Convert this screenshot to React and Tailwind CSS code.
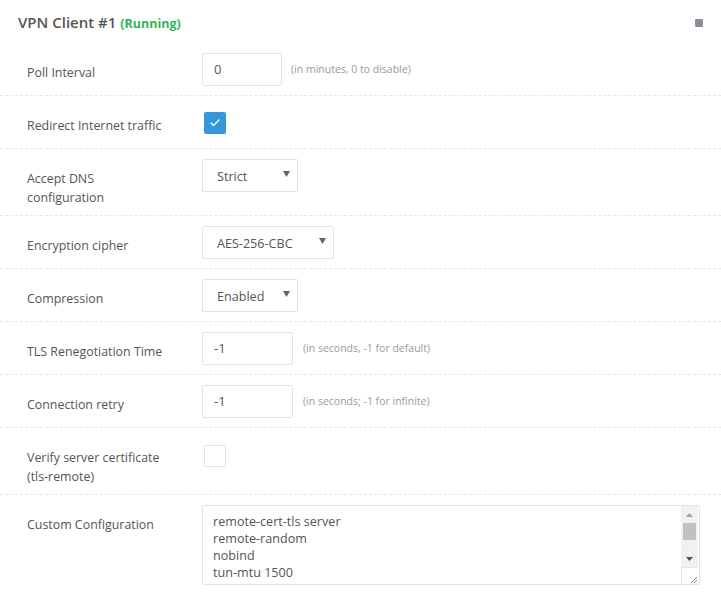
import { Check } from "lucide-react"

const font = { fontFamily: '"Open Sans", "Noto Sans", sans-serif' }

function Row({ label, children, last }) {
  return (
    <div className={`flex pl-[27px] pt-[10px] pb-[9px] ${last ? "" : "border-b border-dashed border-[#e6e6e6]"}`}>
      <div className="w-[175px] shrink-0 pt-[10px] -mb-[1px] pr-[32px] text-[12.4px] leading-[19px] text-[#555]">
        {label}
      </div>
      <div className="flex items-center min-h-[33px] self-start">{children}</div>
    </div>
  )
}

function TextInput({ value, width }) {
  return (
    <div className={`h-[33px] ${width} border border-[#dfe3e6] rounded-[2px] flex items-center pl-[11px] text-[13px] text-[#555]`}>
      {value}
    </div>
  )
}

function Help({ children, gap }) {
  return <span className={`${gap} text-[10.5px] text-[#9a9a9a]`}>{children}</span>
}

function Select({ value, width }) {
  return (
    <div className={`h-[33px] ${width} border border-[#dfe3e6] rounded-[2px] flex items-center justify-between pl-[14px] pr-[7px] text-[12.6px] text-[#555]`}>
      <span className="pt-[3px]">{value}</span>
      <svg width="7" height="6" viewBox="0 0 7 6" className="-mt-[3px]">
        <path d="M0 0H7L3.5 6Z" fill="#666" />
      </svg>
    </div>
  )
}

function Checkbox({ checked }) {
  return checked ? (
    <div className="w-[22px] h-[22px] rounded-[2px] bg-[#3498db] flex items-center justify-center">
      <Check size={12} strokeWidth={2.5} color="#fff" />
    </div>
  ) : (
    <div className="w-[22px] h-[22px] rounded-[2px] border border-[#dfe3e6] bg-white" />
  )
}

function ConfigBox({ lines }) {
  return (
    <div className="w-[498px] h-[80px] border border-[#dfe3e6] rounded-[2px] flex overflow-hidden">
      <div className="flex-1 overflow-hidden pl-[10px] pt-[7px] text-[12.6px] leading-[17px] text-[#555]">
        {lines.map(l => (
          <div key={l}>{l}</div>
        ))}
      </div>
      {/* scrollbar */}
      <div className="w-[17px] mr-[1px] flex flex-col">
        <div className="flex-1 bg-[#f1f1f1] flex flex-col items-center">
          <div className="h-[17px] flex items-center justify-center">
            <svg width="7" height="4" viewBox="0 0 7 4">
              <path d="M3.5 0L7 4H0Z" fill="#a3a3a3" />
            </svg>
          </div>
          <div className="w-[13px] h-[17px] bg-[#c1c1c1]" />
          <div className="flex-1" />
          <div className="h-[17px] flex items-center justify-center">
            <svg width="7" height="4" viewBox="0 0 7 4">
              <path d="M0 0H7L3.5 4Z" fill="#505050" />
            </svg>
          </div>
        </div>
        <div className="h-[17px] bg-white border-t border-l border-[#e6e6e6] flex items-end justify-end">
          <svg width="10" height="10" viewBox="0 0 10 10">
            <path d="M9 3L3 9M9 6L6 9" stroke="#888" strokeWidth="1" />
          </svg>
        </div>
      </div>
    </div>
  )
}

export default function App() {
  const config = [
    "remote-cert-tls server",
    "remote-random",
    "nobind",
    "tun-mtu 1500",
  ]

  return (
    <div className="min-h-screen bg-white" style={font}>
      {/* Title */}
      <div className="flex items-center justify-between pl-[18px] pr-[18px] pt-[12px] pb-[9px]">
        <h2 className="text-[15px] leading-[20px] font-semibold text-[#555]">
          VPN Client #1 <span className="text-[12.5px] font-bold text-[#33b35a]">(Running)</span>
        </h2>
        <div className="w-[8px] h-[8px] rounded-[1px] bg-[#8a9099]" />
      </div>

      <Row label="Poll Interval">
        <TextInput value="0" width="w-[80px]" />
        <Help gap="ml-[9px]">(in minutes, 0 to disable)</Help>
      </Row>

      <Row label="Redirect Internet traffic">
        <div className="ml-[2px] mt-[1px]">
          <Checkbox checked />
        </div>
      </Row>

      <Row label="Accept DNS configuration">
        <Select value="Strict" width="w-[96px]" />
      </Row>

      <Row label="Encryption cipher">
        <Select value="AES-256-CBC" width="w-[132px]" />
      </Row>

      <Row label="Compression">
        <Select value="Enabled" width="w-[96px]" />
      </Row>

      <Row label="TLS Renegotiation Time">
        <TextInput value="-1" width="w-[91px]" />
        <Help gap="ml-[10px]">(in seconds, -1 for default)</Help>
      </Row>

      <Row label="Connection retry">
        <TextInput value="-1" width="w-[91px]" />
        <Help gap="ml-[10px]">(in seconds; -1 for infinite)</Help>
      </Row>

      <Row label="Verify server certificate (tls-remote)">
        <div className="ml-[2px] mt-[2px]">
          <Checkbox />
        </div>
      </Row>

      <Row label="Custom Configuration" last>
        <ConfigBox lines={config} />
      </Row>
    </div>
  )
}
